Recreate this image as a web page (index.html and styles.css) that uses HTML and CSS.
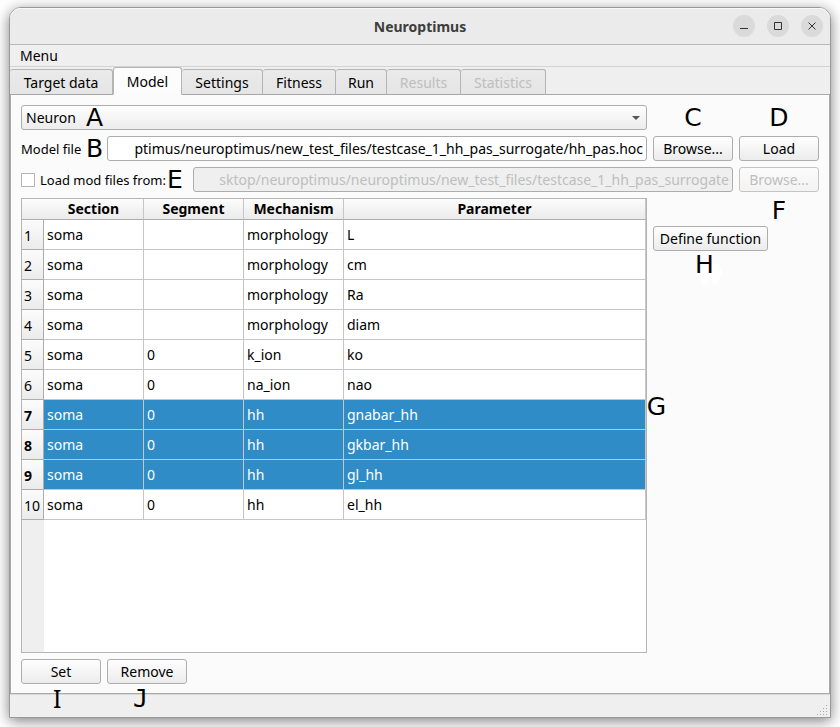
FILE: index.html
```html
<!DOCTYPE html>
<html lang="en">
<head>
<meta charset="utf-8">
<title>Neuroptimus</title>
<link rel="stylesheet" href="styles.css">
</head>
<body>
<div class="window">
  <header class="titlebar">
    <h1>Neuroptimus</h1>
    <div class="controls">
      <button type="button" aria-label="Minimize"><svg viewBox="0 0 22 22"><path d="M7 13.500h8"/></svg></button>
      <button type="button" aria-label="Maximize"><svg viewBox="0 0 22 22"><path d="M7.500 7.500h7v7h-7z"/></svg></button>
      <button type="button" aria-label="Close"><svg viewBox="0 0 22 22"><path d="M7.500 7.500l7 7M14.500 7.500l-7 7"/></svg></button>
    </div>
  </header>
  <nav class="menubar"><button type="button">Menu</button></nav>
  <div class="tabs" role="tablist">
    <button type="button" role="tab" class="tab t-target">Target data</button>
    <button type="button" role="tab" class="tab t-model active" aria-selected="true">Model</button>
    <button type="button" role="tab" class="tab t-settings">Settings</button>
    <button type="button" role="tab" class="tab t-fitness">Fitness</button>
    <button type="button" role="tab" class="tab t-run">Run</button>
    <button type="button" role="tab" class="tab t-results" disabled>Results</button>
    <button type="button" role="tab" class="tab t-stats" disabled>Statistics</button>
  </div>
  <main class="pane">
    <div class="combo">
      <select aria-label="Simulator"><option>Neuron</option></select>
      <svg class="arrow" viewBox="0 0 8 4"><path d="M0 0h8L4 4z"/></svg>
      <span class="mark mark-a">A</span>
    </div>
    <span class="mark cell-mark">C</span>
    <span class="mark cell-mark">D</span>

    <div class="field model-field">
      <label for="model">Model file</label>
      <span class="mark">B</span>
      <input id="model" type="text" value="ptimus/neuroptimus/new_test_files/testcase_1_hh_pas_surrogate/hh_pas.hoc">
    </div>
    <button type="button" class="btn">Browse...</button>
    <button type="button" class="btn">Load</button>

    <div class="field mod-field">
      <input id="usemod" type="checkbox">
      <label for="usemod">Load mod files from:</label>
      <span class="mark">E</span>
      <input type="text" aria-label="Mod files folder" disabled value="sktop/neuroptimus/neuroptimus/new_test_files/testcase_1_hh_pas_surrogate">
    </div>
    <button type="button" class="btn" disabled>Browse...</button>

    <div class="grid-view">
      <table>
        <colgroup><col class="c-num"><col class="c-std"><col class="c-std"><col class="c-std"><col></colgroup>
        <thead><tr><td></td><th>Section</th><th>Segment</th><th>Mechanism</th><th>Parameter</th></tr></thead>
        <tbody>
          <tr><th>1</th><td>soma</td><td></td><td>morphology</td><td>L</td></tr>
          <tr><th>2</th><td>soma</td><td></td><td>morphology</td><td>cm</td></tr>
          <tr><th>3</th><td>soma</td><td></td><td>morphology</td><td>Ra</td></tr>
          <tr><th>4</th><td>soma</td><td></td><td>morphology</td><td>diam</td></tr>
          <tr><th>5</th><td>soma</td><td>0</td><td>k_ion</td><td>ko</td></tr>
          <tr><th>6</th><td>soma</td><td>0</td><td>na_ion</td><td>nao</td></tr>
          <tr class="sel"><th>7</th><td>soma</td><td>0</td><td>hh</td><td>gnabar_hh</td></tr>
          <tr class="sel"><th>8</th><td>soma</td><td>0</td><td>hh</td><td>gkbar_hh</td></tr>
          <tr class="sel"><th>9</th><td>soma</td><td>0</td><td>hh</td><td>gl_hh</td></tr>
          <tr><th>10</th><td>soma</td><td>0</td><td>hh</td><td>el_hh</td></tr>
        </tbody>
      </table>
      <span class="mark mark-g">G</span>
    </div>
    <aside class="side">
      <span class="mark mark-f">F</span>
      <div class="define">
        <button type="button" class="btn">Define function</button>
        <svg class="smudge" viewBox="0 0 26 24"><path d="M1 13C0 6 9 7 14 3C20-1 22 2 24 7C27 12 23 14 22 18C20 24 16 24 14 18C11 17 12 21 9 22C4 24 3 18 1 13z"/></svg>
        <span class="mark mark-h">H</span>
      </div>
    </aside>
    <div class="actions">
      <div class="action"><button type="button" class="btn">Set</button><span class="mark mark-i">I</span></div>
      <div class="action"><button type="button" class="btn">Remove</button><span class="mark mark-j">J</span></div>
    </div>
  </main>
  <footer class="status">
    <svg class="grip" viewBox="0 0 11 11"><path d="M9 0h1v1h-1zM6 3h1v1h-1zM9 3h1v1h-1zM3 6h1v1h-1zM6 6h1v1h-1zM9 6h1v1h-1zM0 9h1v1h-1zM3 9h1v1h-1zM6 9h1v1h-1zM9 9h1v1h-1z"/></svg>
  </footer>
</div>
</body>
</html>
```
FILE: styles.css
```css
* { box-sizing: border-box; }
body {
  margin: 0;
  min-height: 100vh;
  padding: 7px 9px 9px;
  display: flex;
  background: #fff;
  color: #000;
  font: 14px/20px "Noto Sans", "Open Sans", sans-serif;
}
button, input, select { font: inherit; color: inherit; margin: 0; }
.window {
  flex: 1;
  display: flex;
  flex-direction: column;
  border: 1px solid #999;
  border-radius: 12px 12px 0 0;
  background: #efefef;
  box-shadow: 0 3px 14px rgba(0, 0, 0, .5);
}
.titlebar {
  position: relative;
  height: 37px;
  display: flex;
  align-items: center;
  justify-content: center;
  padding-top: 2px;
  border-bottom: 1px solid #b9b9b9;
  border-radius: 11px 11px 0 0;
  background: #ebebeb;
  box-shadow: inset 0 1px #f8f8f8;
}
h1 { margin: 0; font-size: 14px; color: #3d3d3d; }
.controls { position: absolute; right: 7px; top: 7px; display: flex; gap: 12px; }
.controls button { width: 22px; height: 22px; padding: 0; border: 0; border-radius: 50%; background: #dadada; }
.controls svg { display: block; fill: none; stroke: #333; }
.menubar { height: 22px; padding: 1px 10px; border-bottom: 1px solid #d3d3d3; }
.menubar button { padding: 0; border: 0; background: none; display: block; }
.tabs { position: relative; z-index: 1; display: flex; align-items: flex-end; height: 28px; }
.tab {
  height: 26px;
  padding: 2px 0 0;
  border: 1px solid #b4b4b4;
  border-left-width: 0;
  border-bottom-color: #a6a6a6;
  border-radius: 3px 3px 0 0;
  background: linear-gradient(#eaeaea, #e5e5e5);
}
.tab:disabled { color: #bebebe; }
.tab.active { height: 28px; border-left-width: 1px; border-bottom-color: #fbfbfb; background: #fcfcfc; }
.t-target { width: 103px; }
.t-model { width: 69px; }
.t-settings { width: 81px; }
.t-fitness { width: 73px; }
.t-run { width: 51px; }
.t-results { width: 74px; }
.t-stats { width: 85px; }
.pane {
  flex: 1;
  display: grid;
  grid-template-columns: 1fr 80px 80px;
  grid-template-rows: 25px 25px 25px 1fr 25px;
  gap: 6px;
  padding: 10px 10px 9px;
  border: 1px solid #a9a9a9;
  margin-top: -1px;
  background: #fbfbfb;
}
.btn, .combo select {
  width: 100%;
  height: 25px;
  padding: 0;
  border: 1px solid #adadad;
  border-radius: 3px;
  background: linear-gradient(#fefefe, #ececec);
}
.btn:disabled { color: #bebebe; border-color: #c4c4c4; background: linear-gradient(#fbfbfb, #f3f3f3); }
.combo { position: relative; }
.combo select { appearance: none; display: block; padding: 0 4px; }
.arrow { position: absolute; right: 7px; top: 11px; width: 8px; height: 4px; fill: #555; }
.mark { font: 25px/25px "DejaVu Sans", sans-serif; }
.mark-a { position: absolute; left: 65px; top: 0; }
.cell-mark { text-align: center; }
.field { display: flex; align-items: center; min-width: 0; }
.field label { font-size: 13px; white-space: nowrap; }
.model-field label { width: 65px; }
.model-field .mark { width: 21px; }
.mod-field { grid-column: span 2; }
.mod-field label { width: 125px; margin-left: 5px; }
.mod-field .mark { width: 28px; padding-left: 2px; }
input[type="checkbox"] { appearance: none; width: 14px; height: 14px; border: 1px solid #b5b5b5; background: #fff; }
input[type="text"] {
  flex: 1;
  min-width: 0;
  height: 25px;
  padding: 0 3px 0 1px;
  border: 1px solid #adadad;
  border-radius: 3px;
  background: #fff;
  text-align: right;
}
input[type="text"]:disabled { color: #bebebe; background: #efefef; }
.grid-view {
  position: relative;
  border: 1px solid #b5b5b5;
  background: linear-gradient(90deg, #efefef 22px, #fff 22px);
}
table { width: 100%; border-collapse: separate; border-spacing: 0; table-layout: fixed; }
.c-num { width: 22px; }
.c-std { width: 100px; }
th, td { padding: 0 3px; text-align: left; border-right: 1px solid #c6c6c6; border-bottom: 1px solid #c6c6c6; white-space: nowrap; }
thead th, thead td { height: 21px; line-height: 20px; text-align: center; border-bottom-color: #adadad; background: linear-gradient(#fcfcfc, #ebebeb); }
thead td { border-right: 0; }
tbody th, tbody td { height: 30px; line-height: 29px; }
tbody td { background: #fff; }
tbody th { padding: 2px 0 0 2px; line-height: 27px; font-weight: 400; background: linear-gradient(#fcfcfc, #ebebeb); border-color: #adadad; }
.sel th { font-weight: 700; }
.sel td { background: #308cc6; color: #fff; }
.mark-g { position: absolute; right: -20px; top: 195px; }
.side { grid-column: span 2; }
.mark-f { display: block; width: 80px; height: 28px; margin-left: auto; text-align: center; }
.define { position: relative; width: 115px; }
.mark-h { position: absolute; left: 42px; top: 26px; }
.smudge { position: absolute; left: 44px; top: 36px; width: 26px; height: 24px; fill: #fff; }
.actions { grid-column: 1 / -1; display: flex; gap: 6px; }
.action { position: relative; width: 80px; }
.mark-i, .mark-j { position: absolute; top: 27px; }
.mark-i { left: 32px; font-family: "Noto Sans", sans-serif; }
.mark-j { left: 26px; font-family: "DejaVu Sans Mono", monospace; }
.status { height: 23px; display: flex; justify-content: flex-end; align-items: flex-end; border-top: 1px solid #dadada; padding: 0 2px 1px; }
.grip { width: 11px; height: 11px; fill: #aaa; }
```
